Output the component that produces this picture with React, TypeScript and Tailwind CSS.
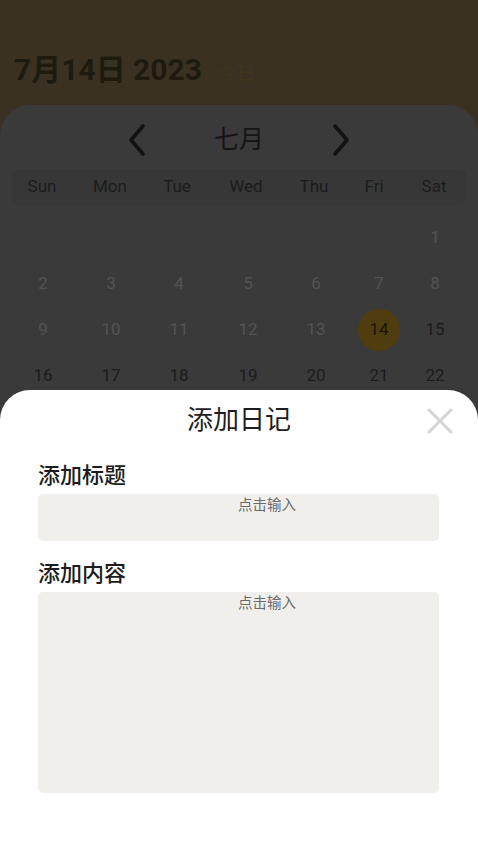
import React from "react";

const weekdays = ["Sun", "Mon", "Tue", "Wed", "Thu", "Fri", "Sat"];

const rows: (number | null)[][] = [
  [null, null, null, null, null, null, 1],
  [2, 3, 4, 5, 6, 7, 8],
  [9, 10, 11, 12, 13, 14, 15],
  [16, 17, 18, 19, 20, 21, 22],
];

function Chevron({ dir }: { dir: "left" | "right" }) {
  return (
    <svg width="22" height="34" viewBox="0 0 22 34" fill="none">
      <path
        d={dir === "left" ? "M17 3 L5 17 L17 31" : "M5 3 L17 17 L5 31"}
        stroke="#121212"
        strokeWidth="3.6"
        strokeLinecap="round"
        strokeLinejoin="round"
      />
    </svg>
  );
}

function Field({ label, tall }: { label: string; tall?: boolean }) {
  return (
    <div className="flex flex-col">
      <div className="text-[22px] font-medium leading-[30px] text-[#1c1c1c]">{label}</div>
      <div
        className={`mt-[3px] rounded-[5px] bg-[#f0efeb] flex justify-center pl-[57px] ${
          tall ? "h-[201px]" : "h-[47px]"
        }`}
      >
        <span className="mt-[3px] text-[14.5px] leading-[18px] text-[#6a6a6a]">点击输入</span>
      </div>
    </div>
  );
}

export default function App() {
  return (
    <div
      className="relative h-[850px] w-[478px] overflow-hidden bg-[#3a3122]"
      style={{ fontFamily: "Roboto, 'Noto Sans CJK SC', sans-serif" }}
    >
      <header className="h-[105px] px-[14px] flex items-end">
        <div className="flex items-baseline gap-[16px] pb-[17px]">
          <span className="text-[30px] font-bold leading-[36px] text-[#1e1a10]">7月14日 2023</span>
          <span className="text-[18.5px] leading-[24px] text-[#3f361b]">今日</span>
        </div>
      </header>

      <section className="rounded-t-[30px] bg-[#3a3a3a] h-[745px] pt-[16px]">
        <div className="flex items-center justify-center gap-[66px] h-[38px]">
          <Chevron dir="left" />
          <span className="text-[25px] leading-[34px] text-[#141414]">七月</span>
          <Chevron dir="right" />
        </div>

        <div className="mx-[12px] mt-[10px] h-[36px] rounded-[8px] bg-[#373737] flex items-center">
          <div className="grid grid-cols-[68px_68px_66px_72px_64px_56px_64px] -ml-[4px] w-full">
            {weekdays.map((d) => (
              <span key={d} className="text-center text-[17px] text-[#1c1c1c]">
                {d}
              </span>
            ))}
          </div>
        </div>

        <div className="mt-[10px] ml-[8px] flex flex-col">
          {rows.map((row, i) => (
            <div
              key={i}
              className="grid grid-cols-[70px_66px_70px_68px_68px_58px_54px] h-[46px] items-center"
            >
              {row.map((n, j) => (
                <div key={j} className="flex justify-center">
                  {n === 14 ? (
                    <span className="flex h-[42px] w-[42px] items-center justify-center rounded-full bg-[#503d0f] text-[17px] text-[#1a1407]">
                      14
                    </span>
                  ) : (
                    <span
                      className={`text-[17px] ${
                        n !== null && n >= 15 ? "text-[#1c1c1c]" : "text-[#535353]"
                      }`}
                    >
                      {n ?? ""}
                    </span>
                  )}
                </div>
              ))}
            </div>
          ))}
        </div>
      </section>

      <div className="absolute inset-x-0 bottom-0 h-[460px] rounded-t-[30px] bg-white px-[38px]">
        <div className="relative flex h-[60px] items-center justify-center">
          <span className="text-[26px] leading-[34px] text-[#1e1e1e]">添加日记</span>
          <svg
            className="absolute right-[-13px] top-[18px]"
            width="26"
            height="26"
            viewBox="0 0 26 26"
            fill="none"
          >
            <path d="M2 2 L24 24 M24 2 L2 24" stroke="#d4d4d4" strokeWidth="3" strokeLinecap="round" />
          </svg>
        </div>
        <div className="mt-[11px] flex flex-col gap-[18px] w-[401px]">
          <Field label="添加标题" />
          <Field label="添加内容" tall />
        </div>
      </div>
    </div>
  );
}
